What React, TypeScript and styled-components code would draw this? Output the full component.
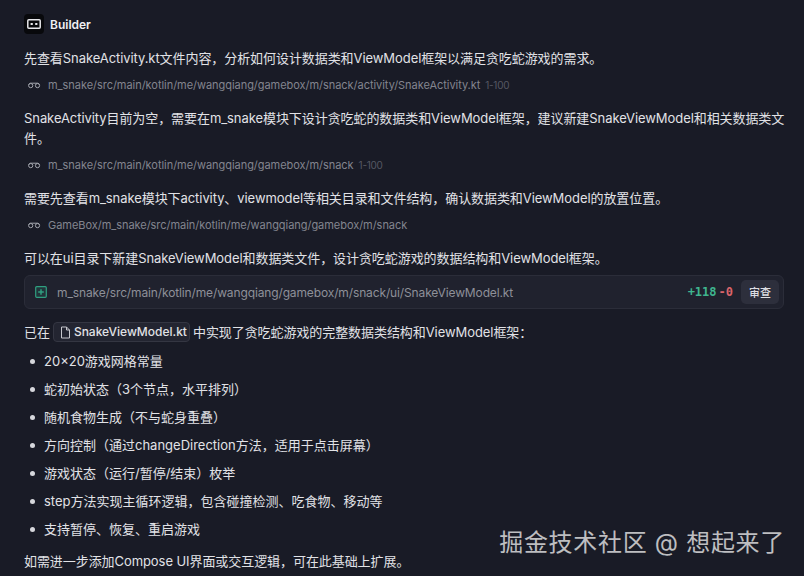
import React from "react";
import styled, { createGlobalStyle } from "styled-components";

const Global = createGlobalStyle`
  html, body { margin: 0; padding: 0; background: #191b26; }
  body { width: 804px; height: 576px; overflow: hidden; font-family: Inter, "Noto Sans CJK SC", sans-serif; }
`;
const Page = styled.div`
  position: relative; width: 804px; height: 576px; box-sizing: border-box; padding: 14px 20px 0 24px;
  background: #191b26; color: #e1e2e6; font-size: 13px; overflow: hidden;
`;
const Header = styled.div`display: flex; align-items: center; gap: 6px; height: 20px; font-weight: 600; font-size: 12px; color: #f0f0f3; margin-bottom: 13.5px;`;
const Avatar = styled.div`width: 20px; height: 20px; border-radius: 4px; background: #08090c; display: flex; align-items: center; justify-content: center;`;
const Para = styled.p`margin: 0 -5px 0 0; line-height: 20px; font-size: 13px; letter-spacing: -0.07px;`;
const PathRow = styled.div`display: flex; align-items: center; gap: 6px; height: 20px; padding-left: 4px; margin: 7.5px 0 12.5px; font-size: 11px; letter-spacing: -0.04px; color: #83858f;`;
const Range = styled.span`color: #565863; font-size: 10px; margin-left: -1px; letter-spacing: -0.3px;`;
const Card = styled.div`display: flex; align-items: center; height: 34px; box-sizing: border-box; margin: 7.5px 0 13px; padding: 0 4px 0 10px; background: #20222e; border: 1px solid #2b2d39; border-radius: 6px;`;
const CardPath = styled.span`flex: 1; margin-left: 10px; font-size: 12px; letter-spacing: -0.13px; color: #8e9099;`;
const Stat = styled.span<{ $c: string }>`font-family: "DejaVu Sans Mono", monospace; font-size: 12px; font-weight: 700; color: ${p => p.$c};`;
const Stats = styled.div`display: flex; gap: 2px; margin-right: 8px;`;
const Review = styled.button`border: 0; background: #2d2f3c; color: #dcdde2; width: 38px; height: 24px; border-radius: 5px; font: 500 11px Inter, "Noto Sans CJK SC", sans-serif; padding: 0;`;
const Chip = styled.span`display: inline-flex; align-items: center; gap: 3px; height: 20px; box-sizing: border-box; padding: 0 2px 0 6px; margin: 0 3px; background: #232531; border: 1px solid #343642; border-radius: 4px; font-weight: 500; font-size: 12px; letter-spacing: 0; vertical-align: top; color: #e1e2e6;`;
const List = styled.ul`list-style: none; margin: 9px 0 12px; padding: 0; display: flex; flex-direction: column; gap: 8px;`;
const Item = styled.li`display: flex; align-items: center; gap: 9px; padding-left: 6px; line-height: 20px; &::before { content: ""; width: 5px; height: 5px; border-radius: 50%; background: #d6d7dc; }`;
const Watermark = styled.div`position: absolute; right: 19px; bottom: 17px; font-size: 24px; letter-spacing: 0.7px; line-height: 32px; color: rgba(255,255,255,.72);`;

const Glasses = () => (
  <svg width="14" height="14" viewBox="0 0 14 14" fill="none" stroke="#a3a5ad" strokeWidth="1"><circle cx="2.7" cy="7.6" r="2.1" /><circle cx="9.5" cy="7.6" r="2.1" /><path d="M.6 6.6 Q1 5.6 2.4 5.2H9.8Q11.2 5.6 11.6 6.6" /></svg>
);
const Robot = () => (
  <svg width="14" height="10" viewBox="0 0 14 10" fill="none"><rect x=".8" y=".8" width="12.4" height="8.4" rx="1" stroke="#e8e8ec" strokeWidth="1.5" /><path d="M3.6 4h2.2v2H3.6zM8.2 4h2.2v2H8.2z" fill="#e8e8ec" /></svg>
);
const AddIcon = () => (
  <svg width="12" height="12" viewBox="0 0 12 12" fill="rgba(47,159,128,.15)" stroke="#2f9f80" strokeWidth="1.2"><rect x=".7" y=".7" width="10.6" height="10.6" rx="1" /><path d="M6 3.2v5.6M3.2 6h5.6" strokeWidth="1.5" /></svg>
);
const FileIcon = () => (
  <svg width="11" height="13" viewBox="0 0 11 13" fill="none" stroke="#c7c8ce" strokeWidth="1"><path d="M1.5 1h5l3 3v8h-8zM6.5 1v3h3" /></svg>
);

const items = ["20×20游戏网格常量","蛇初始状态（3个节点，水平排列）","随机食物生成（不与蛇身重叠）","方向控制（通过changeDirection方法，适用于点击屏幕）","游戏状态（运行/暂停/结束）枚举","step方法实现主循环逻辑，包含碰撞检测、吃食物、移动等","支持暂停、恢复、重启游戏"];

export default function App() {
  return (
    <Page>
      <Global />
      <Header><Avatar><Robot /></Avatar>Builder</Header>
      <Para>先查看SnakeActivity.kt文件内容，分析如何设计数据类和ViewModel框架以满足贪吃蛇游戏的需求。</Para>
      <PathRow><Glasses />m_snake/src/main/kotlin/me/wangqiang/gamebox/m/snack/activity/SnakeActivity.kt<Range>1-100</Range></PathRow>
      <Para>SnakeActivity目前为空，需要在m_snake模块下设计贪吃蛇的数据类和ViewModel框架，建议新建SnakeViewModel和相关数据类文件。</Para>
      <PathRow><Glasses />m_snake/src/main/kotlin/me/wangqiang/gamebox/m/snack<Range>1-100</Range></PathRow>
      <Para>需要先查看m_snake模块下activity、viewmodel等相关目录和文件结构，确认数据类和ViewModel的放置位置。</Para>
      <PathRow><Glasses />GameBox/m_snake/src/main/kotlin/me/wangqiang/gamebox/m/snack</PathRow>
      <Para>可以在ui目录下新建SnakeViewModel和数据类文件，设计贪吃蛇游戏的数据结构和ViewModel框架。</Para>
      <Card><AddIcon /><CardPath>m_snake/src/main/kotlin/me/wangqiang/gamebox/m/snack/ui/SnakeViewModel.kt</CardPath><Stats><Stat $c="#3fb58f">+118</Stat><Stat $c="#d9646a">-0</Stat></Stats><Review>审查</Review></Card>
      <Para>已在<Chip><FileIcon />SnakeViewModel.kt</Chip>中实现了贪吃蛇游戏的完整数据类结构和ViewModel框架：</Para>
      <List>{items.map(t => <Item key={t}>{t}</Item>)}</List>
      <Para>如需进一步添加Compose UI界面或交互逻辑，可在此基础上扩展。</Para>
      <Watermark>掘金技术社区 @ 想起来了</Watermark>
    </Page>
  );
}
